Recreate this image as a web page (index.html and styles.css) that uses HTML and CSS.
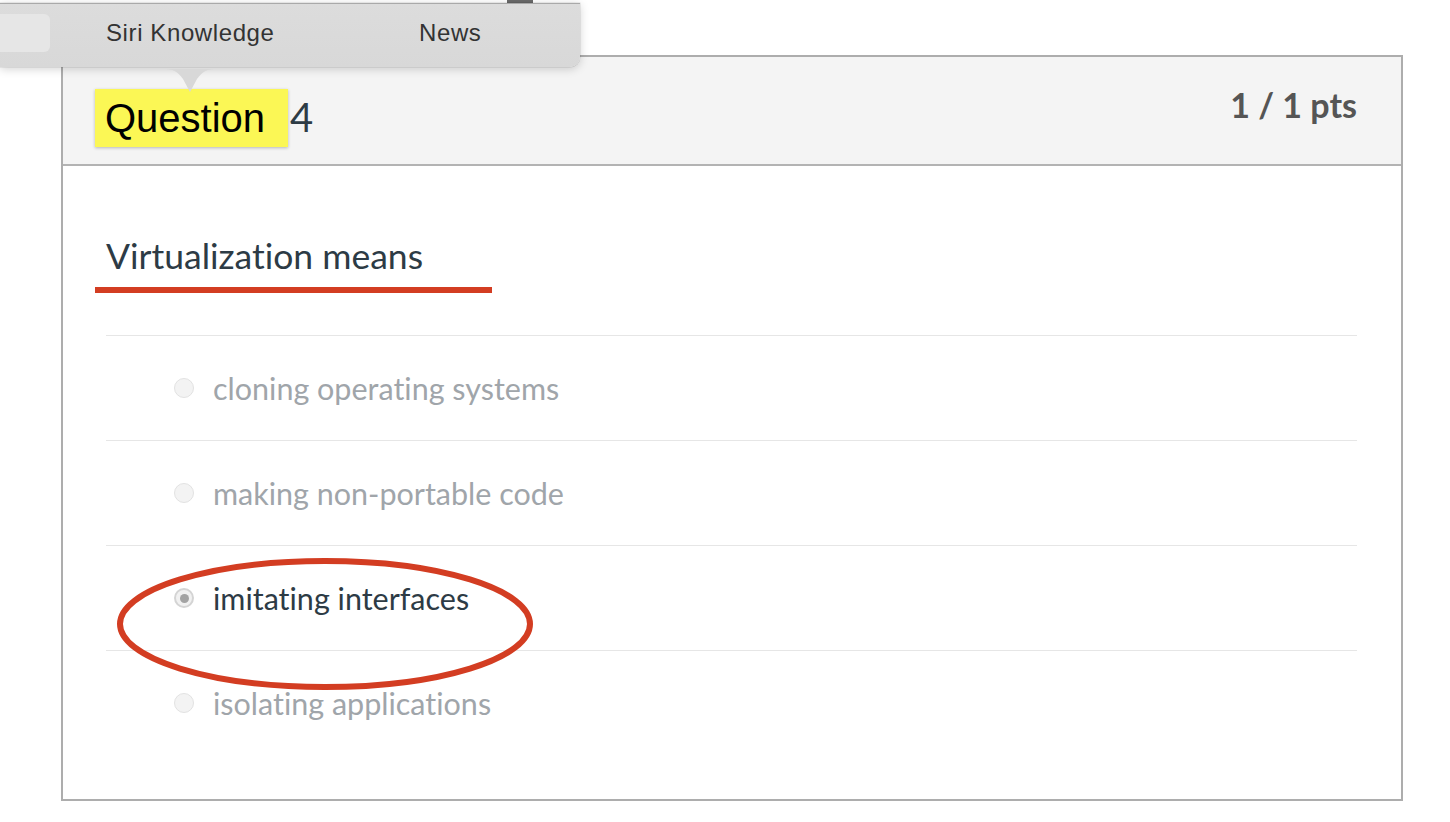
FILE: index.html
```html
<!DOCTYPE html>
<html>
<head>
<meta charset="utf-8">
<link rel="stylesheet" href="styles.css">
</head>
<body>
<div class="page">
  <div class="card">
    <div class="card-header">
      <h2 class="title"><span class="hl">Question </span><span class="num">4</span></h2>
      <div class="pts">1 / 1 pts</div>
    </div>
    <div class="card-body">
      <div class="question">Virtualization means</div>
      <div class="answers">
        <div class="answer"><span class="radio"></span><span class="label">cloning operating systems</span></div>
        <div class="answer"><span class="radio"></span><span class="label">making non-portable code</span></div>
        <div class="answer selected"><span class="radio"><span class="dot"></span></span><span class="label">imitating interfaces</span></div>
        <div class="answer"><span class="radio"></span><span class="label">isolating applications</span></div>
      </div>
    </div>
  </div>

  <div class="underline-mark"></div>
  <svg class="ellipse-mark" width="424" height="142" viewBox="0 0 424 142">
    <ellipse cx="210" cy="69" rx="205" ry="63" fill="none" stroke="#d33d22" stroke-width="6"/>
  </svg>

  <div class="topstrip"><span class="cut-icon"></span></div>
  <div class="popover">
    <div class="pop-btn"></div>
    <div class="pop-item siri">Siri Knowledge</div>
    <div class="pop-item news">News</div>
    <svg class="pop-arrow" width="54" height="24" viewBox="0 0 54 24">
      <path d="M0 0 C10 0 14 2 20 10 L27 23 L34 10 C40 2 44 0 54 0 Z" fill="#d8d8d8"/>
    </svg>
  </div>
</div>
</body>
</html>
```

FILE: styles.css
```css
html, body {
  margin: 0;
  padding: 0;
  background: #ffffff;
}

.page {
  position: relative;
  width: 1450px;
  height: 822px;
  overflow: hidden;
  font-family: "Lato", "Liberation Sans", sans-serif;
  font-variant-ligatures: none;
}

.card {
  margin-left: 61px;
  margin-top: 55px;
  width: 1342px;
  height: 746px;
  box-sizing: border-box;
  border: 2px solid #adadad;
  background: #fff;
}

.card-header {
  height: 109px;
  box-sizing: border-box;
  background: #f4f4f4;
  border-bottom: 2px solid #b3b3b3;
  display: flex;
  justify-content: space-between;
  align-items: flex-start;
  padding: 0 44px 0 32px;
}

.title {
  margin: 31px 0 0 0;
  font-weight: normal;
  font-size: 40px;
  line-height: 58px;
  display: flex;
  align-items: baseline;
}

.hl {
  font-family: "Liberation Sans", Arial, sans-serif;
  background: #fbf755;
  color: #000;
  padding: 0 0 0 10px;
  width: 183px;
  display: inline-block;
  height: 58px;
  box-shadow: 0 1px 3px rgba(0, 0, 0, 0.25);
  white-space: pre;
}

.num {
  font-family: "Lato", sans-serif;
  color: #2d3b45;
  margin-left: 2px;
}

.pts {
  margin-top: 28px;
  font-family: "Lato", sans-serif;
  font-weight: bold;
  font-size: 34px;
  line-height: 40px;
  color: #555555;
}

.card-body {
  padding: 0 44px 0 43px;
}

.question {
  height: 169px;
  box-sizing: border-box;
  padding-top: 70px;
  font-size: 35.5px;
  line-height: 40px;
  color: #2d3b45;
}

.answer {
  height: 105px;
  box-sizing: border-box;
  border-top: 1px solid #e6e6e6;
  display: flex;
  align-items: center;
  padding-left: 68px;
  gap: 19px;
}

.radio {
  width: 20px;
  height: 20px;
  box-sizing: border-box;
  border-radius: 50%;
  border: 1.5px solid #e2e2e2;
  background: #f3f3f3;
  display: flex;
  align-items: center;
  justify-content: center;
  flex: none;
}

.selected .radio {
  border: 2px solid #d4d4d4;
  background: #f1f1f1;
}

.dot {
  width: 9px;
  height: 9px;
  border-radius: 50%;
  background: #a3a3a3;
}

.label {
  font-size: 30.5px;
  line-height: 36px;
  color: #a0a5aa;
}

.selected .label {
  color: #2d3b45;
}

.underline-mark {
  position: absolute;
  left: 95px;
  top: 287px;
  width: 397px;
  height: 6px;
  background: #d33d22;
}

.ellipse-mark {
  position: absolute;
  left: 115px;
  top: 555px;
}

.topstrip {
  position: absolute;
  left: 0;
  top: 0;
  width: 580px;
  height: 4px;
  background: #fff;
  overflow: hidden;
}

.cut-icon {
  position: absolute;
  left: 507px;
  top: 0;
  width: 26px;
  height: 4px;
  background: #6a6a6a;
}

.popover {
  position: absolute;
  left: 0;
  top: 3px;
  width: 580px;
  height: 63px;
  background: linear-gradient(#dcdcdc, #d8d8d8);
  border-top: 1px solid #a9a9a9;
  border-bottom-right-radius: 10px;
  box-shadow: 0 2px 10px rgba(0, 0, 0, 0.18), 0 0 0 0.5px rgba(0, 0, 0, 0.12);
  font-family: "Liberation Sans", "Inter", sans-serif;
  font-size: 24px;
  letter-spacing: 0.6px;
  color: #333333;
}

.pop-btn {
  position: absolute;
  left: -10px;
  top: 10px;
  width: 60px;
  height: 38px;
  border-radius: 6px;
  background: #e6e6e6;
}

.pop-item {
  position: absolute;
  top: 15px;
  line-height: 28px;
}

.siri { left: 106px; }
.news { left: 419px; }

.pop-arrow {
  position: absolute;
  left: 163px;
  top: 62px;
  transform: translateY(3px);
}
```
